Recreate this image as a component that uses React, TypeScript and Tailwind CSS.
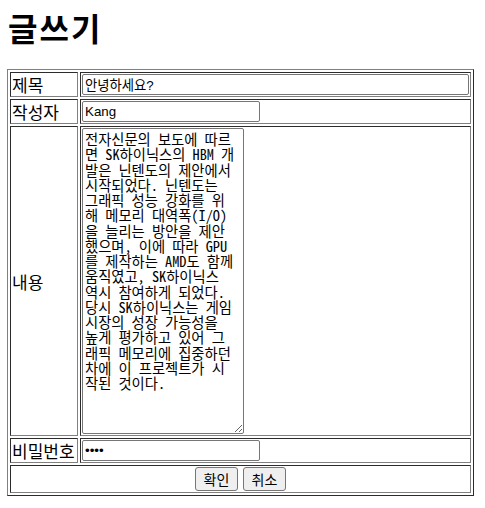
import React from 'react'

const cell =
  'border border-solid border-t-[#2c2c2c] border-l-[#2c2c2c] border-r-[#808080] border-b-[#808080] p-[1px]'

const field =
  "block h-[21px] border border-[#767676] rounded-[2px] px-[2px] py-[1px] bg-white text-[13.33px] font-['Liberation_Sans','Noto_Sans_CJK_KR',sans-serif]"

const contentLines = [
  '전자신문의 보도에 따르',
  '면 SK하이닉스의 HBM 개',
  '발은 닌텐도의 제안에서',
  '시작되었다. 닌텐도는',
  '그래픽 성능 강화를 위',
  '해 메모리 대역폭(I/O)',
  '을 늘리는 방안을 제안',
  '했으며, 이에 따라 GPU',
  '를 제작하는 AMD도 함께',
  '움직였고, SK하이닉스',
  '역시 참여하게 되었다.',
  '당시 SK하이닉스는 게임',
  '시장의 성장 가능성을',
  '높게 평가하고 있어 그',
  '래픽 메모리에 집중하던',
  '차에 이 프로젝트가 시',
  '작된 것이다.',
]

export default function App() {
  return (
    <div className="min-h-screen bg-white pt-[11px] pl-[7px] text-black font-['Noto_Sans_CJK_KR',sans-serif]">
      {/* Title */}
      <h1 className="text-[32px] font-bold leading-[32px] tracking-[2px] pl-[1px] mb-[26px]">글쓰기</h1>

      {/* Form table */}
      <table className="w-[467px] border-separate border-spacing-[2px] border border-solid border-t-[#808080] border-l-[#808080] border-r-[#2c2c2c] border-b-[#2c2c2c]">
        <tbody>
          <tr>
            <td className={`${cell} w-[68px] text-[17px] leading-[21px]`}>제목</td>
            <td className={cell}>
              <input type="text" defaultValue="안녕하세요?" className={`${field} w-full`} />
            </td>
          </tr>
          <tr>
            <td className={`${cell} text-[17px] leading-[21px]`}>작성자</td>
            <td className={cell}>
              <input type="text" defaultValue="Kang" className={`${field} w-[178px]`} />
            </td>
          </tr>
          <tr>
            <td className={`${cell} text-[17px] leading-[21px]`}>내용</td>
            <td className={cell}>
              <textarea
                defaultValue={contentLines.join('\n')}
                className="block w-[162px] h-[306px] border border-[#767676] rounded-[2px] p-[2px] bg-white text-[14.3px] leading-[15.25px] font-['Noto_Sans_Mono_CJK_KR','Noto_Sans_CJK_KR',monospace] [font-feature-settings:'hwid']"
              />
            </td>
          </tr>
          <tr>
            <td className={`${cell} text-[17px] leading-[21px]`}>비밀번호</td>
            <td className={cell}>
              <input type="password" defaultValue="1234" className={`${field} w-[178px]`} />
            </td>
          </tr>
          <tr>
            <td colSpan={2} className={cell}>
              <div className="flex justify-center gap-[5px]">
                <button className="w-[43px] h-[24px] border border-[#767676] rounded-[3px] bg-[#efefef] text-[14px] leading-none">
                  확인
                </button>
                <button className="w-[43px] h-[24px] border border-[#767676] rounded-[3px] bg-[#efefef] text-[14px] leading-none">
                  취소
                </button>
              </div>
            </td>
          </tr>
        </tbody>
      </table>
    </div>
  )
}
